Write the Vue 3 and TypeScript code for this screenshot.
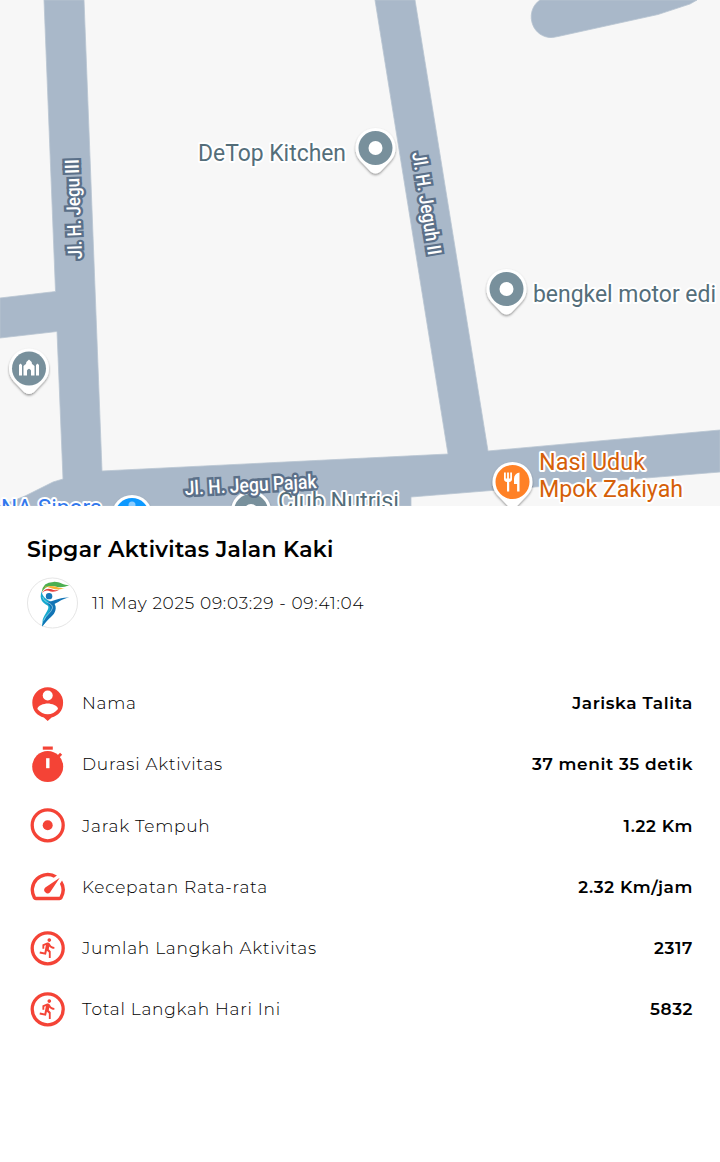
<template>
  <main class="activity">
    <svg class="map" viewBox="0 0 720 506" role="img" aria-label="Peta aktivitas">
      <defs>
        <filter id="pin-shadow" x="-30%" y="-30%" width="160%" height="160%">
          <feDropShadow dx="0" dy="1.5" stdDeviation="1.3" flood-opacity=".4" />
        </filter>
        <path id="pin" d="M0-20a20 20 0 0 1 20 20c0 7-3 11-7 15L5 23.500q-5 4-10 0L-13 15c-4-4-7-8-7-15a20 20 0 0 1 20-20z" />
      </defs>
      <rect width="720" height="506" fill="#f7f7f7" />
      <g class="roads">
        <path v-for="r in roads" :key="r" :d="r" />
      </g>

      <g v-for="p in pins" :key="p.kind + p.x" :transform="`translate(${p.x} ${p.y})`">
        <use href="#pin" fill="#fff" filter="url(#pin-shadow)" />
        <circle r="17" :fill="p.color" />
        <circle v-if="p.kind === 'dot'" r="7" fill="#fff" />
        <path
          v-else-if="p.kind === 'mosque'"
          fill="#fff"
          d="M-10 7V-3.500l1.500-1.500L-7-3.500V7zM7 7V-3.500L8.500-5 10-3.500V7zM-5.500 7V-2.500Q-4-4-3-4.500-3-7 0-9 3-7 3-4.500 4-4 5.500-2.500V7H2V2Q0-1.500-2 2V7z"
        />
        <path
          v-else-if="p.kind === 'food'"
          fill="#fff"
          d="M-8.500-9.500h1.800v6h1.300v-6h1.800v6h1.300v-6H-.5v6.500q0 2.500-2.800 3V9.500h-2.200V0q-3-.5-3-3zM7-9.500v19H4.600V2H1.500v-5q0-5.500 5.500-6.500z"
        />
        <circle v-else cy="-10" r="3.500" fill="#8bccff" />
      </g>

      <text
        v-for="l in labels"
        :key="l.text"
        :class="['label', l.kind]"
        :textLength="l.width"
        lengthAdjust="spacingAndGlyphs"
        :transform="`translate(${l.x} ${l.y}) rotate(${l.angle || 0})`"
      >{{ l.text }}</text>
    </svg>

    <section class="summary">
      <h1>Sipgar Aktivitas Jalan Kaki</h1>
      <div class="when">
        <svg class="logo" viewBox="0 0 52 52">
          <circle cx="26" cy="26" r="25.500" fill="#fff" stroke="#dedede" stroke-width=".8" />
          <path fill="#4caf50" d="M15 15Q16 4.500 27 4.500C33 4 37 8 43 8Q35 11.500 28 9 20 7 15 15z" />
          <path fill="#f9b233" d="M15 15Q19 7 27 9C32 10 35 12 39 10.500 32 14 26 11.500 19 9 15 15z" />
          <path fill="#e6403a" d="M15 16Q19 10 25 12 28 13.500 33 12.500 27 16 22 13.500 18 12.500 15 16z" />
          <circle cx="22.500" cy="19" r="3.300" fill="#1777b8" />
          <path fill="#16a9cf" d="M15 14C12 22 16 26 21 28.500 24 31 18 37 16 43L15.500 50C20 43 30 37 29 29 28 24 16 24 15 14z" />
          <path fill="#1274b5" d="M20 25C27 25 32 20 43 20.500 36 21.500 33 25 28 27 31 33 28 38 22 42L15.500 50C16 41 27 35 23 29z" />
          <path fill="none" stroke="#c9eff5" stroke-width=".6" d="M16 20C18 27 26 25 26 31 25 36 19 38 17 44" />
        </svg>
        <time>11 May 2025 09:03:29 - 09:41:04</time>
      </div>

      <dl class="stats">
        <div v-for="s in stats" :key="s.label" class="stat">
          <svg class="icon" viewBox="-0.4 0 41 41" v-html="icons[s.icon]" />
          <dt>{{ s.label }}</dt>
          <dd>{{ s.value }}</dd>
        </div>
      </dl>
    </section>
  </main>
</template>

<script setup lang="ts">
interface Pin {
  kind: "dot" | "mosque" | "food" | "shop";
  x: number;
  y: number;
  color: string;
}

interface MapLabel {
  text: string;
  kind: "place" | "street" | "food" | "shop";
  x: number;
  y: number;
  width: number;
  angle?: number;
}

const roads = [
  "M44 0H84L102 471 448 454 375 0H415L488 451 720 430V472L411 497V506H0L25 496 53 482 63 479 57 331.500 0 338V298L55.500 291.500z",
  "M540 0C525 10 530 35 549 37.500Q552 38 558 36.500L658 14.500 690 4 697 0z",
];

const pins: Pin[] = [
  { kind: "dot", x: 375.5, y: 148, color: "#78909c" },
  { kind: "dot", x: 506.5, y: 289, color: "#78909c" },
  { kind: "mosque", x: 29, y: 368.5, color: "#78909c" },
  { kind: "shop", x: 132, y: 515, color: "#0d99ff" },
  { kind: "dot", x: 251, y: 511, color: "#78909c" },
  { kind: "food", x: 512.5, y: 482, color: "#ff8126" },
];

const labels: MapLabel[] = [
  { text: "DeTop Kitchen", kind: "place", x: 198, y: 161, width: 148 },
  { text: "bengkel motor edi", kind: "place", x: 533, y: 302, width: 183 },
  { text: "Club Nutrisi", kind: "place", x: 278, y: 509, width: 121 },
  { text: "NA Sipora", kind: "shop", x: 1, y: 516, width: 101 },
  { text: "Nasi Uduk", kind: "food", x: 539, y: 470, width: 106 },
  { text: "Mpok Zakiyah", kind: "food", x: 539, y: 497, width: 144 },
  { text: "Jl. H. Jegu III", kind: "street", x: 82, y: 259, width: 100, angle: -92 },
  { text: "Jl. H. Jeguh II", kind: "street", x: 412, y: 153, width: 104, angle: 81 },
  { text: "Jl. H. Jegu Pajak", kind: "street", x: 185, y: 495, width: 132, angle: -3 },
];

const runner =
  '<circle cx="20.300" cy="20.300" r="15.500" fill="none" stroke="currentColor" stroke-width="3.300"/><path transform="translate(9.500 8.900) scale(.92)" d="M13.490 5.480c1.100 0 2-.9 2-2s-.9-2-2-2-2 .9-2 2 .9 2 2 2zm-3.600 13.900l1-4.400 2.100 2v6h2v-7.500l-2.100-2 .6-3c1.300 1.500 3.300 2.500 5.500 2.500v-2c-1.900 0-3.500-1-4.300-2.400l-1-1.600c-.4-.6-1-1-1.700-1-.3 0-.5.1-.8.1l-5.200 2.200v4.700h2v-3.400l1.800-.7-1.600 8.100-4.900-1-.4 2 7 1.400z"/>';

const icons: Record<string, string> = {
  person:
    '<path d="M20.300 4.300a15.400 15.400 0 0 1 15.400 15.400c0 8-5 13-11.500 14.800L20.300 38l-3.900-3.500C9.900 32.700 4.900 27.700 4.900 19.700A15.400 15.400 0 0 1 20.300 4.300z"/><circle cx="20.300" cy="12.500" r="5" fill="#fff"/><path fill="#fff" d="M10 26c0-3.300 6.500-5.400 10.300-5.400S30.600 22.700 30.600 26c-5.500 7-15 7-20.600 0z"/>',
  timer:
    '<circle cx="20.300" cy="22.500" r="15.500"/><path d="M15.400 2.500h10v3.200h-10z"/><path d="M30 13.500l3.700-3.700" stroke="currentColor" stroke-width="3"/><path fill="#fff" d="M18.700 14.200h3.400v10h-3.400z"/>',
  distance:
    '<circle cx="20.300" cy="20.300" r="15.500" fill="none" stroke="currentColor" stroke-width="3.300"/><circle cx="20.300" cy="20.300" r="5"/>',
  speed:
    '<path transform="translate(-.2 0) scale(1.708)" d="M20.390 8.560l-1.240 1.860a8 8 0 0 1-.22 7.580H5.070A8 8 0 0 1 15.580 6.850l1.860-1.240A10 10 0 0 0 3.350 19a2 2 0 0 0 1.720 1h13.850a2 2 0 0 0 1.740-1 10 10 0 0 0-.27-10.440zM10.590 15.410a2 2 0 0 0 2.830 0l5.660-8.490-8.490 5.660a2 2 0 0 0 0 2.830z"/>',
  runner,
};

const stats = [
  { icon: "person", label: "Nama", value: "Jariska Talita" },
  { icon: "timer", label: "Durasi Aktivitas", value: "37 menit 35 detik" },
  { icon: "distance", label: "Jarak Tempuh", value: "1.22 Km" },
  { icon: "speed", label: "Kecepatan Rata-rata", value: "2.32 Km/jam" },
  { icon: "runner", label: "Jumlah Langkah Aktivitas", value: "2317" },
  { icon: "runner", label: "Total Langkah Hari Ini", value: "5832" },
];
</script>

<style>
body {
  margin: 0;
  background: #fff;
}
</style>

<style scoped>
.activity {
  min-height: 1162px;
  background: #fff;
  color: #000;
  font-family: Montserrat, Inter, sans-serif;
}
.map {
  display: block;
  width: 100%;
  height: 506px;
}
.roads {
  fill: #a9b8c9;
  stroke: #b9c5d2;
  stroke-width: 0.8;
}
.label {
  font-family: Roboto, sans-serif;
  font-size: 24px;
  stroke: #fff;
  stroke-width: 4px;
  stroke-linejoin: round;
  paint-order: stroke;
}
.label.place {
  fill: #546e7a;
}
.label.food {
  fill: #d55f08;
}
.label.shop {
  fill: #3278ed;
}
.label.street {
  font-size: 19.5px;
  font-weight: 500;
  fill: #fff;
  stroke: #5b7089;
  stroke-width: 5px;
  stroke-linejoin: miter;
  stroke-miterlimit: 2;
}
.summary {
  padding: 29px 27px 0;
}
h1 {
  margin: 0;
  font-size: 22px;
  line-height: 30px;
  font-weight: 600;
  letter-spacing: 0.27px;
}
.when {
  display: flex;
  align-items: center;
  gap: 14px;
  height: 52px;
  margin-top: 12px;
  font-size: 17px;
  font-weight: 300;
  letter-spacing: 0.7px;
}
.logo {
  width: 51px;
  height: 52px;
}
.stats {
  margin: 43.5px 0 0;
}
.stat {
  display: flex;
  align-items: center;
  height: 61.25px;
  font-size: 17px;
}
.icon {
  width: 41px;
  height: 41px;
  margin-right: 14px;
  color: #f44336;
  fill: currentColor;
}
dt {
  font-weight: 300;
  letter-spacing: 0.74px;
}
dd {
  margin: 0 0 0 auto;
  font-weight: 600;
  letter-spacing: 0.57px;
}
</style>
